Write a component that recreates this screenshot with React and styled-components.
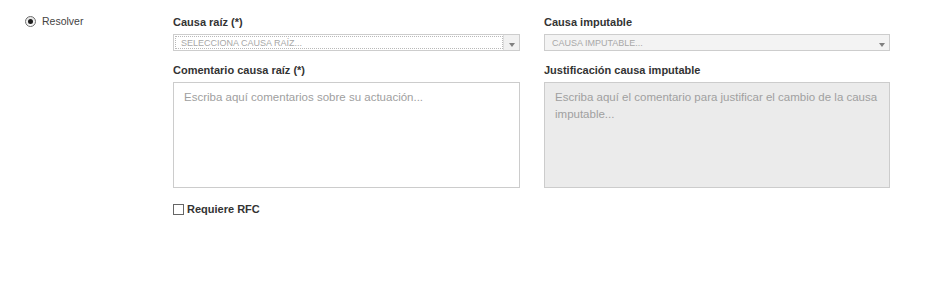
import styled, { createGlobalStyle } from "styled-components";

const GlobalStyle = createGlobalStyle`
  body {
    margin: 0;
    background: #ffffff;
    font-family: "Liberation Sans", Arial, sans-serif;
    font-size: 12px;
    color: #333333;
  }
`;

function App() {
  return (
    <>
      <GlobalStyle />
      <Page>
        <RadioOption>
          <RadioDot $checked />
          <span>Resolver</span>
        </RadioOption>
        <FormArea>
          <FormGrid>
            <Field>
              <Label>Causa raíz (*)</Label>
              <Select $focused>
                <SelectText>SELECCIONA CAUSA RAÍZ...</SelectText>
                <SelectArrow $boxed />
              </Select>
            </Field>
            <Field>
              <Label>Causa imputable</Label>
              <Select $disabled>
                <SelectText>CAUSA IMPUTABLE...</SelectText>
                <SelectArrow />
              </Select>
            </Field>
            <Field>
              <Label>Comentario causa raíz (*)</Label>
              <TextArea placeholder="Escriba aquí comentarios sobre su actuación..." />
            </Field>
            <Field>
              <Label>Justificación causa imputable</Label>
              <TextArea
                disabled
                placeholder="Escriba aquí el comentario para justificar el cambio de la causa imputable..."
              />
            </Field>
          </FormGrid>
          <CheckRow>
            <CheckBox />
            <span>Requiere RFC</span>
          </CheckRow>
        </FormArea>
      </Page>
    </>
  );
}

export default App;

const Page = styled.div`
  display: flex;
  align-items: flex-start;
  padding: 15px 0 0 25px;
`;

const RadioOption = styled.div`
  display: flex;
  align-items: center;
  gap: 6px;
  width: 148px;
  font-size: 10.5px;
  color: #444444;
  line-height: 12px;
`;

const RadioDot = styled.span`
  position: relative;
  box-sizing: border-box;
  width: 11px;
  height: 11px;
  border-radius: 50%;
  border: 1px solid #6d6d6d;
  background: linear-gradient(#e4e4e4, #fbfbfb);

  &::after {
    content: "";
    display: ${(p) => (p.$checked ? "block" : "none")};
    position: absolute;
    left: 2px;
    top: 2px;
    width: 5px;
    height: 5px;
    border-radius: 50%;
    background: #1d1d1d;
  }
`;

const FormArea = styled.div`
  display: flex;
  flex-direction: column;
  width: 717px;
`;

const FormGrid = styled.div`
  display: grid;
  grid-template-columns: 347px 346px;
  column-gap: 24px;
  row-gap: 12px;
`;

const Field = styled.div`
  display: flex;
  flex-direction: column;
`;

const Label = styled.label`
  font-size: 11px;
  font-weight: bold;
  color: #333333;
  line-height: 14px;
  margin-bottom: 5px;
`;

const Select = styled.div`
  position: relative;
  display: flex;
  align-items: center;
  box-sizing: border-box;
  height: 17px;
  border: 1px solid #cdcdcd;
  background: ${(p) => (p.$disabled ? "#f3f3f3" : "#ffffff")};

  &::before {
    content: "";
    display: ${(p) => (p.$focused ? "block" : "none")};
    position: absolute;
    left: 1px;
    top: 1px;
    bottom: 1px;
    right: 16px;
    border: 1px dotted #b9b9b9;
  }
`;

const SelectText = styled.span`
  flex: 1;
  padding-left: 7px;
  font-size: 9px;
  color: #a8a8a8;
`;

const SelectArrow = styled.span`
  display: flex;
  align-items: center;
  justify-content: center;
  align-self: stretch;
  width: 15px;
  background: ${(p) => (p.$boxed ? "#f1f1f1" : "transparent")};
  border-left: 1px solid ${(p) => (p.$boxed ? "#dddddd" : "transparent")};

  &::after {
    content: "";
    margin-top: 4px;
    border-left: 3px solid transparent;
    border-right: 3px solid transparent;
    border-top: 4px solid #808080;
  }
`;

const TextArea = styled.textarea`
  box-sizing: border-box;
  height: 106px;
  resize: none;
  padding: 6px 10px;
  border: 1px solid #cccccc;
  border-radius: 0;
  background: #ffffff;
  font-family: "Liberation Sans", Arial, sans-serif;
  font-size: 11.5px;
  line-height: 17px;
  outline: none;

  &:disabled {
    background: #ebebeb;
  }

  &::placeholder {
    color: #a0a0a0;
    opacity: 1;
  }
`;

const CheckRow = styled.div`
  display: flex;
  align-items: center;
  gap: 3px;
  margin-top: 15px;
  font-size: 11px;
  font-weight: bold;
  color: #333333;
`;

const CheckBox = styled.span`
  box-sizing: border-box;
  width: 11px;
  height: 11px;
  border: 1px solid #666666;
  background: #ffffff;
`;
